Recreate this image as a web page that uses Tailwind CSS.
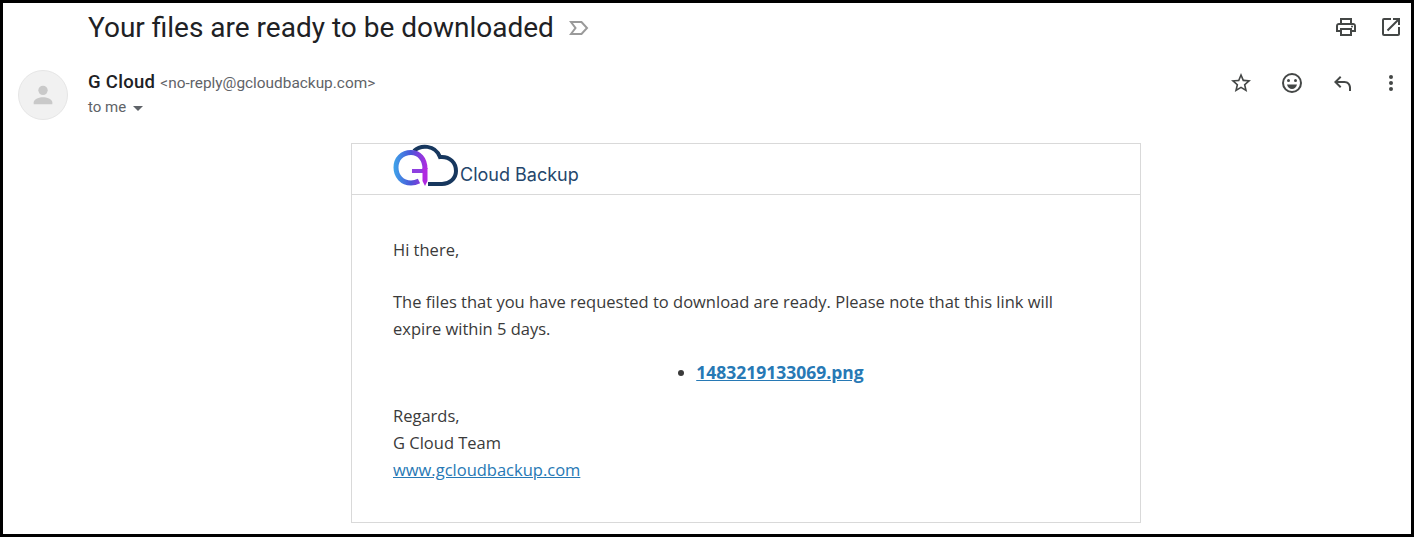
<!DOCTYPE html>
<html lang="en">
<head>
  <meta charset="UTF-8">
  <title>Your files are ready to be downloaded</title>
  <script src="https://cdn.jsdelivr.net/npm/@tailwindcss/browser@4"></script>
</head>
<body class="bg-white">
  <!-- Black frame round the message -->
  <div class="w-[1414px] h-[537px] border-[3px] border-black overflow-hidden font-['Roboto',sans-serif] text-[#202124]">

    <!-- Subject row -->
    <div class="flex items-center h-[48px] pl-[85px] pr-[8px]">
      <h1 class="pt-[1px] text-[28px] leading-[48px] font-normal">Your files are ready to be downloaded</h1>
      <svg class="ml-[15px] mt-[1px] w-[20px] h-[20px]" viewBox="0 0 20 20" fill="none" stroke="#9a9a9a" stroke-width="2">
        <path d="M2 4h10.500l5.500 6-5.500 6H2l4.500-6z"/>
      </svg>
      <div class="ml-auto flex items-center gap-[21px]">
        <svg class="w-[24px] h-[24px]" viewBox="0 0 24 24" fill="#444746"><path d="M19 8h-1V3H6v5H5c-1.700 0-3 1.300-3 3v6h4v4h12v-4h4v-6c0-1.700-1.300-3-3-3zM8 5h8v3H8zm8 14H8v-4h8zm4-4h-2v-2H6v2H4v-4c0-.6.4-1 1-1h14c.6 0 1 .4 1 1z"/><circle cx="18" cy="11.500" r="1"/></svg>
        <svg class="w-[24px] h-[24px]" viewBox="0 0 24 24" fill="#444746"><path d="M19 19H5V5h7V3H5a2 2 0 0 0-2 2v14a2 2 0 0 0 2 2h14c1.100 0 2-.9 2-2v-7h-2zM14 3v2h3.600l-9.800 9.800 1.400 1.400L19 6.400V10h2V3z"/></svg>
      </div>
    </div>

    <!-- Sender row -->
    <div class="flex items-start mt-[19px] pl-[15px] pr-[8px]">
      <div class="flex items-center justify-center w-[50px] h-[50px] rounded-full bg-[#f1f1f1] border border-[#e6e6e6]">
        <svg class="w-[28px] h-[28px]" viewBox="0 0 24 24" fill="#c9c9c9"><circle cx="12" cy="8" r="4"/><path d="M4 20v-1.500C4 15.500 9 14 12 14s8 1.500 8 4.500V20z"/></svg>
      </div>
      <div class="ml-[20px]">
        <div class="flex items-baseline h-[24px]">
          <span class="text-[18.500px] font-medium leading-[24px] tracking-[0.3px]">G Cloud</span>
          <span class="ml-[5px] text-[15.400px] text-[#5f6368]">&lt;no-reply@gcloudbackup.com&gt;</span>
        </div>
        <div class="flex items-center h-[26px] text-[15px] text-[#5f6368]">
          to me
          <span class="ml-[7px] mt-[2px] w-0 h-0 border-x-[5px] border-x-transparent border-t-[5px] border-t-[#5f6368]"></span>
        </div>
      </div>
      <div class="ml-auto flex items-center mt-[1px]">
        <svg class="w-[24px] h-[24px]" viewBox="0 0 24 24" fill="#444746"><path d="M22 9.240l-7.190-.62L12 2 9.190 8.630 2 9.240l5.460 4.730L5.820 21 12 17.270 18.180 21l-1.630-7.030zM12 15.400l-3.760 2.270 1-4.280-3.320-2.880 4.380-.38L12 6.100l1.710 4.040 4.380.38-3.320 2.880 1 4.280z"/></svg>
        <svg class="ml-[27px] w-[24px] h-[24px]" viewBox="0 0 24 24" fill="#444746"><path d="M12 2a10 10 0 1 0 0 20 10 10 0 0 0 0-20zm0 18a8 8 0 1 1 0-16 8 8 0 0 1 0 16z"/><circle cx="8.500" cy="9.500" r="1.500"/><circle cx="15.500" cy="9.500" r="1.500"/><path d="M7 13.500h10c-.5 2.600-2.600 4.500-5 4.500s-4.500-1.900-5-4.500z"/></svg>
        <svg class="ml-[26px] w-[24px] h-[24px]" viewBox="0 0 24 24" fill="#444746"><path d="M21 20h-2v-3.500c0-2.500-2-4.500-4.500-4.500H7.800l3.600 3.600L10 17l-6-6 6-6 1.400 1.400L7.800 10h6.700c3.600 0 6.500 2.900 6.500 6.500z"/></svg>
        <svg class="ml-[25px] w-[24px] h-[24px]" viewBox="0 0 24 24" fill="#444746"><circle cx="12" cy="6" r="2"/><circle cx="12" cy="12" r="2"/><circle cx="12" cy="18" r="2"/></svg>
      </div>
    </div>

    <!-- Email card -->
    <div class="w-[790px] h-[380px] mt-[23px] ml-[348px] border border-[#d9d9d9] font-['Open_Sans',sans-serif] text-[#3a3a3a] text-[16.500px]">
      <!-- Logo -->
      <div class="flex items-end h-[51px] pl-[41px] border-b border-[#d9d9d9]">
        <svg class="w-[66px] h-[44px] mb-[6px]" viewBox="0 0 66 44" fill="none">
          <defs>
            <linearGradient id="gGrad" gradientUnits="userSpaceOnUse" x1="2" y1="0" x2="34" y2="0">
              <stop offset="0" stop-color="#3f9fe8"/><stop offset="0.5" stop-color="#4a55d8"/><stop offset="1" stop-color="#b02ae0"/>
            </linearGradient>
          </defs>
          <path d="M21 7C27 1 42 0 47 13C57 12 63 19 63 27C63 35 56 40 49 40H35" stroke="#17375e" stroke-width="4"/>
          <path d="M32 25C32 15 26 8.500 18 8.500C9 8.500 3 15 3 23.500C3 32 9 39 18 39C21 39 24 38 26 37" stroke="url(#gGrad)" stroke-width="5"/>
          <path d="M19 27H32" stroke="#8e3fe0" stroke-width="4"/>
          <path d="M29.500 24H34.500V37L32 42L29.500 37Z" fill="#b02ae0"/>
        </svg>
        <span class="ml-[1px] mb-[9px] font-['Inter',sans-serif] text-[18px] leading-[20px] text-[#24466c]">Cloud Backup</span>
      </div>

      <!-- Body -->
      <div class="px-[41px] pt-[41px]">
        <p class="leading-[27px]">Hi there,</p>
        <p class="mt-[25px] leading-[27px]">The files that you have requested to download are ready. Please note that this link will<br>expire within 5 days.</p>
        <ul class="mt-[17px] pl-[50px] flex justify-center leading-[27px]">
          <li class="flex items-center">
            <span class="w-[6px] h-[6px] mr-[12px] rounded-full bg-[#3a3a3a]"></span>
            <a href="#" class="text-[17.500px] font-bold underline text-[#2779b5]">1483219133069.png</a>
          </li>
        </ul>
        <p class="mt-[16px] leading-[27px]">Regards,<br>G Cloud Team<br><a href="#" class="underline text-[#2779b5]">www.gcloudbackup.com</a></p>
      </div>
    </div>
  </div>
</body>
</html>
